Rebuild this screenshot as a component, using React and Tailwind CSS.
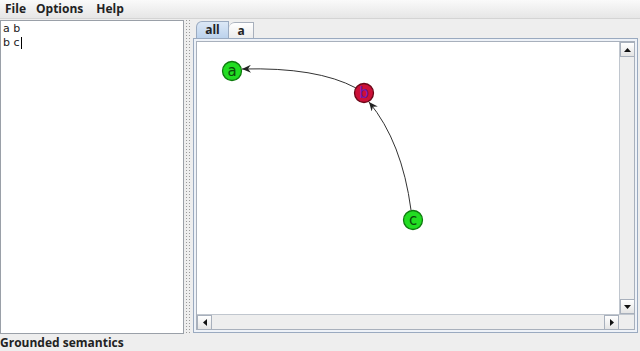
import React from "react";

const font = "font-['Open_Sans','DejaVu_Sans',sans-serif]";

const Node = ({ x, y, label, fill, stroke, color }) => (
    <g>
        <circle cx={x} cy={y} r="9.5" fill={fill} stroke={stroke} strokeWidth="1.3" />
        <text x={x} y={y + 5} textAnchor="middle" fontSize="15" fill={color} fontFamily="DejaVu Sans, sans-serif">
            {label}
        </text>
    </g>
);

const Graph = () => (
    <svg width="425" height="276" className="block">
        <defs>
            <marker id="arrow" markerWidth="10" markerHeight="8" refX="9" refY="4" orient="auto" markerUnits="userSpaceOnUse">
                <path d="M0,0 L9,4 L0,8 L3,4 Z" fill="#222" />
            </marker>
        </defs>
        {/* b -> a */}
        <path d="M159,46 Q120,25 45,27" fill="none" stroke="#333" strokeWidth="1" markerEnd="url(#arrow)" />
        {/* c -> b */}
        <path d="M214,168 Q205,100 172,60" fill="none" stroke="#333" strokeWidth="1" markerEnd="url(#arrow)" />
        <Node x={35} y={29} label="a" fill="#22dd22" stroke="#0f7a0f" color="#0a4a0a" />
        <Node x={167} y={51} label="b" fill="#cc1038" stroke="#6a0818" color="#6a1ab0" />
        <Node x={216} y={178} label="c" fill="#22dd22" stroke="#0f7a0f" color="#0a4a0a" />
    </svg>
);

const ArrowBtn = ({ dir }) => {
    const paths = {
        up: "M1,5 L4.5,1 L8,5 Z",
        down: "M1,1 L4.5,5 L8,1 Z",
        left: "M5,1 L1,4.5 L5,8 Z",
        right: "M1,1 L5,4.5 L1,8 Z"
    };
    const vertical = dir === "up" || dir === "down";
    return (
        <div className="w-[15px] h-[15px] shrink-0 flex items-center justify-center bg-gradient-to-b from-white to-[#e4e4e4] border border-[#a8b0bc]">
            <svg width={vertical ? 9 : 6} height={vertical ? 6 : 9}>
                <path d={paths[dir]} fill="#111" />
            </svg>
        </div>
    );
};

export default function App() {
    return (
        <div className={`w-[640px] h-[351px] bg-[#eeeeee] flex flex-col overflow-hidden ${font}`}>
            {/* Menu bar */}
            <div className="h-[19px] shrink-0 flex items-center pl-[5px] text-[12px] font-bold text-[#222] bg-gradient-to-b from-[#fafafa] to-[#e6e6e6] border-b border-[#d4d4d4]">
                <span>File</span>
                <span className="ml-[10px]">Options</span>
                <span className="ml-[13px]">Help</span>
            </div>

            {/* Main split */}
            <div className="flex-1 flex min-h-0">
                {/* Left text area */}
                <div className="w-[184px] shrink-0 bg-white border border-[#9aa0a8] mt-[1px] mb-[1px] pl-[2px] pt-[1px] text-[11px] leading-[14px] text-[#222] font-['DejaVu_Sans',sans-serif]">
                    <div>a b</div>
                    <div className="flex items-center">
                        b c<span className="inline-block w-px h-[12px] bg-black ml-[1px]" />
                    </div>
                </div>

                {/* Divider */}
                <div className="w-[7px] shrink-0 mx-[1px] bg-[radial-gradient(#9a9a9a_0.7px,transparent_0.8px)] bg-[length:3px_3px]" />

                {/* Tabbed pane */}
                <div className="flex-1 flex flex-col min-w-0 pr-[2px]">
                    <div className="h-[19px] shrink-0 flex items-end pl-[3px] pt-[2px]">
                        <div className="h-[17px] w-[33px] flex items-center justify-center text-[12px] font-bold text-[#222] bg-gradient-to-b from-[#dce8f6] to-[#bcd2ec] border border-b-0 border-[#9aaac0] rounded-tl-[6px]">
                            all
                        </div>
                        <div className="h-[16px] w-[25px] flex items-center justify-center text-[12px] font-bold text-[#222] bg-gradient-to-b from-white to-[#ececec] border border-b-0 border-l-0 border-[#a8b0bc] rounded-tl-[6px]">
                            a
                        </div>
                    </div>
                    <div className="flex-1 min-h-0 border border-[#9aaac0] bg-[#eef2f8] p-[2px] mb-[2px]">
                        <div className="h-full flex flex-col border border-[#a8b0bc] bg-white">
                            <div className="flex-1 flex min-h-0">
                                <div className="flex-1 min-w-0 overflow-hidden">
                                    <Graph />
                                </div>
                                <div className="w-[15px] shrink-0 flex flex-col bg-[#eeeeee] border-l border-[#c0c6ce]">
                                    <ArrowBtn dir="up" />
                                    <div className="flex-1" />
                                    <ArrowBtn dir="down" />
                                </div>
                            </div>
                            <div className="h-[15px] shrink-0 flex bg-[#eeeeee] border-t border-[#c0c6ce] pr-[15px]">
                                <ArrowBtn dir="left" />
                                <div className="flex-1" />
                                <ArrowBtn dir="right" />
                            </div>
                        </div>
                    </div>
                </div>
            </div>

            {/* Status bar */}
            <div className="h-[16px] shrink-0 flex items-center text-[12px] font-bold text-[#222]">
                Grounded semantics
            </div>
        </div>
    );
}
